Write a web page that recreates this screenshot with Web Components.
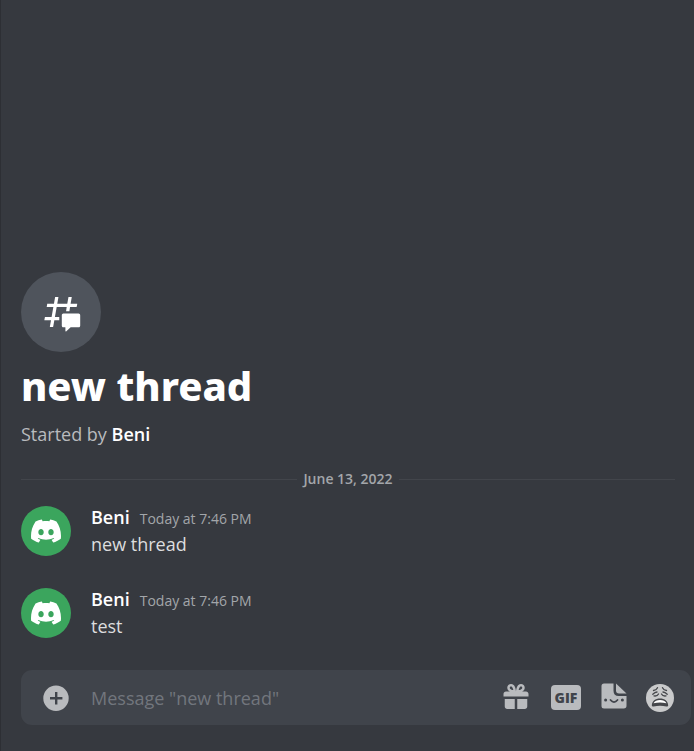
<!DOCTYPE html>
<html lang="en">
<head>
<meta charset="utf-8">
<title>new thread</title>
<style>
html,body{margin:0;background:#36393f}
body{font-family:"Open Sans","Noto Sans",sans-serif;color:#dcddde}
</style>
</head>
<body>
<thread-view>
  <thread-header name="new thread" author="Beni"></thread-header>
  <date-divider>June 13, 2022</date-divider>
  <chat-message author="Beni" time="Today at 7:46 PM">new thread</chat-message>
  <chat-message author="Beni" time="Today at 7:46 PM">test</chat-message>
  <message-composer slot="composer" thread="new thread"></message-composer>
</thread-view>
<script>
const define = (tag, markup) => customElements.define(tag, class extends HTMLElement {
  connectedCallback() {
    if (this.shadowRoot) return;
    const t = document.createElement('template');
    t.innerHTML = markup(this);
    this.attachShadow({mode: 'open'}).append(t.content.cloneNode(true));
  }
});

define('thread-view', () => `
<style>
:host{display:flex;flex-direction:column;min-height:100vh;box-sizing:border-box;border-left:1px solid #2d2f34;background:#36393f}
main{flex:1;display:flex;flex-direction:column;justify-content:flex-end;padding:20px 19px 0 20px}
footer{padding:0 3px 26px 20px}
</style>
<main><slot></slot></main>
<footer><slot name="composer"></slot></footer>`);

define('thread-header', el => `
<style>
:host{display:block}
.badge{width:80px;height:80px;border-radius:50%;background:#4f545c;display:grid;place-items:center;color:#fff}
svg{width:40px;height:40px;fill:currentColor}
h1{margin:9px 0 0;font-family:"Noto Sans","Open Sans",sans-serif;font-size:40px;line-height:50px;font-weight:800;color:#fff}
p{margin:10px 0 0;font-size:18px;line-height:26px;color:#b9bbbe}
strong{color:#fff;font-weight:600}
</style>
<div class="badge"><svg viewBox="0 0 24 24" aria-hidden="true">
<path d="M5.43309 21C5.35842 21 5.30189 20.9325 5.31494 20.859L5.99991 17H2.14274C2.06819 17 2.01168 16.9327 2.02453 16.8593L2.33253 15.0993C2.34258 15.0419 2.39244 15 2.45074 15H6.34991L7.40991 9H3.55274C3.47819 9 3.42168 8.93274 3.43453 8.85931L3.74253 7.09931C3.75258 7.04189 3.80244 7 3.86074 7H7.75991L8.45234 3.09903C8.46251 3.04174 8.51231 3 8.57049 3H10.3267C10.4014 3 10.4579 3.06746 10.4449 3.14097L9.75991 7H15.7599L16.4523 3.09903C16.4625 3.04174 16.5123 3 16.5705 3H18.3267C18.4014 3 18.4579 3.06746 18.4449 3.14097L17.7599 7H21.6171C21.6916 7 21.7481 7.06725 21.7353 7.14069L21.4273 8.90069C21.4172 8.95811 21.3674 9 21.3091 9H17.4099L17.0495 11.5H15.05L15.4104 9H9.41035L8.35035 15H10.96V17H7.99991L7.30749 20.901C7.29732 20.9583 7.24752 21 7.18934 21H5.43309Z"/>
<path d="M13.4399 12.96C12.9097 12.96 12.4799 13.3898 12.4799 13.92V20.2213C12.4799 20.7515 12.9097 21.1813 13.4399 21.1813H14.3999C14.5325 21.1813 14.6399 21.2887 14.6399 21.4213V23.4597C14.6399 23.6677 14.8865 23.7773 15.0408 23.6378L17.4858 21.4289C17.6622 21.2695 17.8916 21.1813 18.1294 21.1813H22.5599C23.0901 21.1813 23.5199 20.7515 23.5199 20.2213V13.92C23.5199 13.3898 23.0901 12.96 22.5599 12.96H13.4399Z"/></svg></div>
<h1>${el.getAttribute('name')}</h1>
<p>Started by <strong>${el.getAttribute('author')}</strong></p>`);

define('date-divider', () => `
<style>
:host{display:flex;align-items:center;gap:6px;margin:22px 0 17px;font-size:14px;line-height:20px;font-weight:600;color:#a3a6aa}
:host::before,:host::after{content:"";flex:1;height:1px;background:#42454b}
</style><slot></slot>`);

define('user-avatar', () => `
<style>
:host{display:grid;place-items:center;width:50px;height:50px;border-radius:50%;background:#3ba55d;color:#fff}
svg{width:30px;height:30px;fill:currentColor}
</style>
<svg viewBox="0 0 24 24" aria-hidden="true"><path d="M20.317 4.3698a19.7913 19.7913 0 00-4.8851-1.5152.0741.0741 0 00-.0785.0371c-.211.3753-.4447.8648-.6083 1.2495-1.8447-.2762-3.68-.2762-5.4868 0-.1636-.3933-.4058-.8742-.6177-1.2495a.077.077 0 00-.0785-.037 19.7363 19.7363 0 00-4.8852 1.515.0699.0699 0 00-.0321.0277C.5334 9.0458-.319 13.5799.0992 18.0578a.0824.0824 0 00.0312.0561c2.0528 1.5076 4.0413 2.4228 5.9929 3.0294a.0777.0777 0 00.0842-.0276c.4616-.6304.8731-1.2952 1.226-1.9942a.076.076 0 00-.0416-.1057c-.6528-.2476-1.2743-.5495-1.8722-.8923a.077.077 0 01-.0076-.1277c.1258-.0943.2517-.1923.3718-.2914a.0743.0743 0 01.0776-.0105c3.9278 1.7933 8.18 1.7933 12.0614 0a.0739.0739 0 01.0785.0095c.1202.099.246.1981.3728.2924a.077.077 0 01-.0066.1276 12.2986 12.2986 0 01-1.873.8914.0766.0766 0 00-.0407.1067c.3604.698.7719 1.3628 1.225 1.9932a.076.076 0 00.0842.0286c1.961-.6067 3.9495-1.5219 6.0023-3.0294a.077.077 0 00.0313-.0552c.5004-5.177-.8382-9.6739-3.5485-13.6604a.061.061 0 00-.0312-.0286zM8.02 15.3312c-1.1825 0-2.1569-1.0857-2.1569-2.419 0-1.3332.9555-2.4189 2.157-2.4189 1.2108 0 2.1757 1.0952 2.1568 2.419 0 1.3332-.9555 2.4189-2.1569 2.4189zm7.9748 0c-1.1825 0-2.1569-1.0857-2.1569-2.419 0-1.3332.9554-2.4189 2.1569-2.4189 1.2108 0 2.1757 1.0952 2.1568 2.419 0 1.3332-.946 2.4189-2.1568 2.4189Z"/></svg>`);

define('chat-message', el => `
<style>
:host{display:flex;gap:20px;padding-bottom:30px}
.body{flex:1;min-width:0}
header{display:flex;align-items:baseline;gap:10px;height:24px;line-height:22px}
strong{font-size:18px;font-weight:600;color:#fff}
time{font-size:14px;color:#a3a6aa}
p{margin:0;font-size:18px;line-height:28px}
</style>
<user-avatar></user-avatar>
<div class="body"><header><strong>${el.getAttribute('author')}</strong><time>${el.getAttribute('time')}</time></header>
<p><slot></slot></p></div>`);

define('message-composer', el => `
<style>
:host{display:flex;align-items:center;box-sizing:border-box;height:55px;border-radius:11px;background:#40444b;color:#b9bbbe;padding:0 16px 0 20px}
button{all:unset;display:grid;place-items:center;cursor:pointer}
svg{width:30px;height:30px;fill:currentColor;display:block}
input{flex:1;min-width:0;margin:0 20px;padding:0;border:0;outline:0;background:none;font:18px/28px "Open Sans","Noto Sans",sans-serif;color:#dcddde}
input::placeholder{color:#72767d;opacity:1}
.tools{display:flex;align-items:center;gap:18px}
.gif{width:34px}
.gif span{width:30px;border-radius:4px;background:#b9bbbe;text-align:center;font:800 14px/25px "Open Sans","Noto Sans",sans-serif;color:#40444b}
.sticker svg{width:26px}
</style>
<button aria-label="Add attachment"><svg viewBox="0 0 30 30"><path fill-rule="evenodd" d="M15 2.5a12.7 12.7 0 1 0 0 25.4a12.7 12.7 0 0 0 0-25.4ZM14 9h2.4v5.1H21.4v2.4h-5V21.4H14v-4.9H9v-2.4h5Z"/></svg></button>
<input type="text" aria-label="Message" placeholder='Message "${el.getAttribute('thread')}"'>
<div class="tools">
<button aria-label="Send a gift"><svg viewBox="0 1.2 24 24"><path fill-rule="evenodd" d="M16.886 7.999H20C21.104 7.999 22 8.896 22 9.999V11.999H2V9.999C2 8.896 2.897 7.999 4 7.999H7.114C6.663 7.764 6.236 7.477 5.879 7.121C4.709 5.951 4.709 4.048 5.879 2.879C7.012 1.746 8.986 1.746 10.121 2.877C11.758 4.514 11.979 7.595 11.998 7.941L11.99 7.999H12.01L12.002 7.941C12.022 7.595 12.242 4.515 13.879 2.878C15.014 1.745 16.986 1.746 18.121 2.877C19.29 4.049 19.29 5.952 18.121 7.121C17.764 7.477 17.337 7.764 16.886 7.999ZM7.293 5.707C6.903 5.316 6.903 4.682 7.293 4.292C7.481 4.103 7.732 4 8 4C8.268 4 8.519 4.103 8.707 4.292C9.297 4.882 9.641 5.94 9.825 6.822C8.945 6.639 7.879 6.293 7.293 5.707ZM14.174 6.824C14.359 5.941 14.702 4.883 15.293 4.293C15.481 4.103 15.732 4 16 4C16.268 4 16.519 4.103 16.706 4.291C17.096 4.682 17.097 5.316 16.707 5.707C16.116 6.298 15.057 6.642 14.174 6.824ZM3 13.999H11V21.999H5C3.896 21.999 3 21.103 3 19.999V13.999ZM13 13.999H21V19.999C21 21.104 20.104 21.999 19 21.999H13V13.999Z"/></svg></button>
<button class="gif"><span>GIF</span></button>
<button class="sticker" aria-label="Stickers"><svg viewBox="2 1.5 26 30"><path d="M5 2h9.500v7.200q0 5.300 5.300 5.300H27.500v9.800q0 2.700-2.700 2.700H5q-2.500 0-2.500-2.500V4.500Q2.500 2 5 2Z"/><path d="M17 2l10.500 10H20q-3 0-3-3Z"/><circle cx="6.600" cy="18.500" r="1.500" fill="#40444b"/><circle cx="23.400" cy="18.500" r="1.500" fill="#40444b"/><path d="M11.500 18.500q3.500 4.200 7 0" fill="none" stroke="#40444b" stroke-width="1.800" stroke-linecap="round"/></svg></button>
<button aria-label="Select emoji"><svg viewBox="0 0 30 30"><circle cx="15" cy="15" r="14" fill="#c9cacb"/><g fill="none" stroke="#45474b" stroke-width="1.300" stroke-linecap="round"><path d="M8.500 7.500q2.800-.3 4-2.800M21.500 7.500q-2.800-.3-4-2.800M7.800 11.200q2.200-2 4.200-2.200M22.200 11.200q-2.200-2-4.200-2.200M9 12.900q3.200.6 4.500-1.900M21 12.900q-3.200.6-4.500-1.900"/></g><path d="M6.800 22.500c.2-4.800 3.600-7 8.200-7s8 2.200 8.200 7q-.2 1.300-1.700.9q-6.500-1.300-13 0q-1.500.4-1.700-.9Z" fill="#45474b"/><path d="M8.500 20.300c1.300-2.500 3.500-3.300 6.500-3.300s5.200.8 6.500 3.300q-6.500-1.500-13 0Z" fill="#fff"/></svg></button>
</div>`);
</script>
</body>
</html>
